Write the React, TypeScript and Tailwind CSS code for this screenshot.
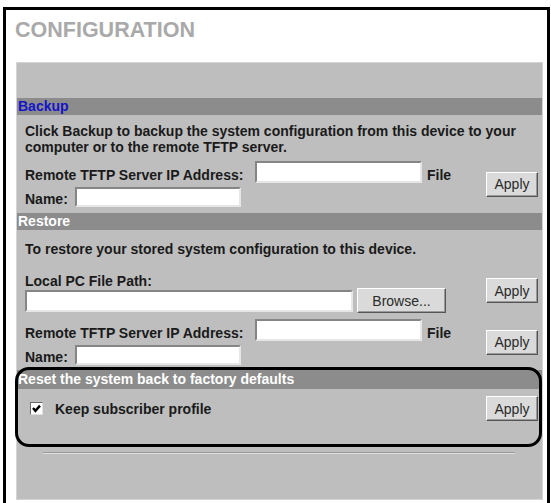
import type { ReactNode } from 'react'

// sunken white text box, classic form style
const Field = ({ className }: { className: string }) => (
  <div
    className={`bg-white border-2 border-t-[#858585] border-l-[#858585] border-b-[#e6e6e6] border-r-[#e6e6e6] ${className}`}
  />
)

const Button = ({ label, className = 'w-[52px]' }: { label: string; className?: string }) => (
  <button
    type="button"
    className={`h-[25px] ${className} shrink-0 bg-[#dadada] border border-t-white border-l-white border-b-[#555] border-r-[#555] shadow-[inset_-1px_-1px_0_#9a9a9a] text-[14px] font-normal leading-none text-[#2a2a2a]`}
  >
    {label}
  </button>
)

const SectionBar = ({ children, className }: { children: ReactNode; className: string }) => (
  <div className={`bg-[#8c8c8c] pl-px whitespace-nowrap ${className}`}>{children}</div>
)

const TftpRows = () => (
  <div className="flex flex-col gap-[4px]">
    <div className="flex h-[22px] items-end">
      <span className="w-[230px] leading-[16px] whitespace-nowrap">Remote TFTP Server IP Address:</span>
      <Field className="w-[167px] h-[22px]" />
      <span className="ml-[5px] leading-[16px]">File</span>
    </div>
    <div className="flex h-[20px] items-end">
      <span className="w-[50px] leading-[16px]">Name:</span>
      <Field className="w-[166px] h-[20px]" />
    </div>
  </div>
)

const Configuration = () => {
  return (
    <div className="w-[551px] h-[503px] overflow-hidden bg-white font-['Liberation_Sans',Arial,sans-serif]">
      <div className="ml-[3px] mt-[7px] w-[547px] h-[520px] border-[3px] border-black">
        <h1 className="pl-[9px] pt-[8px] text-[21.5px] leading-[24px] font-bold text-[#a9a9a9]">CONFIGURATION</h1>

        <div className="relative ml-[10px] mr-[4px] mt-[20px] h-[438px] bg-[#bebebe] border border-[#d4d4d4] text-[14px] font-bold text-[#1a1a1a]">
          <div className="h-[35px]" />

          {/* Backup */}
          <SectionBar className="h-[17px] leading-[17px] text-[#1414c8]">Backup</SectionBar>
          <div className="pl-[8px] pr-[4px]">
            <p className="mt-[8px] leading-[16px] whitespace-nowrap">
              Click Backup to backup the system configuration from this device to your
              <br />
              computer or to the remote TFTP server.
            </p>
            <div className="mt-[6px] flex items-center justify-between">
              <TftpRows />
              <Button label="Apply" />
            </div>
          </div>

          {/* Restore */}
          <SectionBar className="mt-[6px] h-[17px] leading-[17px] text-white">Restore</SectionBar>
          <div className="pl-[8px] pr-[4px]">
            <p className="mt-[12px] leading-[14px] whitespace-nowrap">
              To restore your stored system configuration to this device.
            </p>
            <div className="mt-[19px] flex items-start justify-between">
              <div>
                <div className="leading-[13px]">Local PC File Path:</div>
                <div className="flex h-[25px] items-center">
                  <Field className="w-[328px] h-[22px]" />
                  <Button label="Browse..." className="ml-[4px] w-[89px]" />
                </div>
              </div>
              <div className="mt-[3px]">
                <Button label="Apply" />
              </div>
            </div>
            <div className="mt-[6px] flex items-center justify-between">
              <TftpRows />
              <Button label="Apply" />
            </div>
          </div>

          {/* Factory reset */}
          <SectionBar className="mt-[5px] h-[19px] leading-[19px] text-white">
            Reset the system back to factory defaults
          </SectionBar>
          <div className="pl-[8px] pr-[4px]">
            <div className="mt-[7px] flex h-[25px] items-center justify-between">
              <div className="flex items-center">
                <span className="ml-[5px] flex h-[13px] w-[13px] items-center justify-center bg-white border border-t-[#6a6a6a] border-l-[#6a6a6a] border-b-[#e0e0e0] border-r-[#e0e0e0]">
                  <svg width="9" height="9" viewBox="0 0 9 9">
                    <path d="M1 4 L3.4 6.8 L8 1.6" fill="none" stroke="#000" strokeWidth="2.4" />
                  </svg>
                </span>
                <span className="ml-[12px] leading-[16px]">Keep subscriber profile</span>
              </div>
              <Button label="Apply" />
            </div>
          </div>

          <div className="ml-[26px] mt-[31px] w-[472px] border-t border-b border-t-[#9a9a9a] border-b-[#dedede]" />

          {/* callout ring round the reset block */}
          <div className="pointer-events-none absolute left-[-2px] top-[304px] h-[80px] w-[527px] rounded-[14px] border-[3px] border-black" />
        </div>
      </div>
    </div>
  )
}

export default function App() {
  return <Configuration />
}
